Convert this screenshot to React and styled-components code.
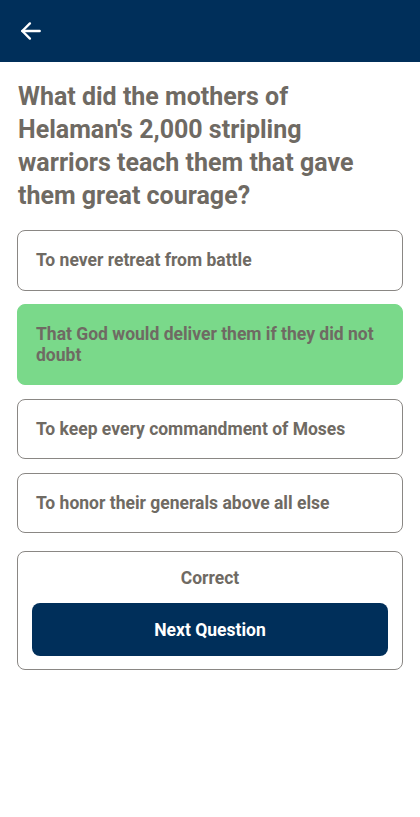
import React from 'react';
import styled, {createGlobalStyle} from 'styled-components';

const Global = createGlobalStyle`
body {
  margin: 0;
  background: #ffffff;
  font-family: Roboto, "Liberation Sans", sans-serif;
}
`;

const Header = styled.header`
height: 62px;
background: #002f5a;
display: flex;
align-items: center;
padding-left: 18px;
box-sizing: border-box;
`;

const BackButton = styled.button`
background: none;
border: none;
padding: 0;
width: 26px;
height: 26px;
display: flex;
align-items: center;
justify-content: center;
`;

const Content = styled.main`
padding: 18px 17px 0;
display: flex;
flex-direction: column;
`;

const Question = styled.h1`
margin: 0 0 18px;
padding-left: 1px;
max-width: 350px;
font-size: 25px;
line-height: 33px;
font-weight: 700;
color: #6f6a63;
`;

const Options = styled.div`
display: flex;
flex-direction: column;
gap: 13.5px;
`;

const Option = styled.div`
border: 1px solid ${p => (p.correct ? '#7ad98a' : '#8a8784')};
background: ${p => (p.correct ? '#7ad98a' : '#ffffff')};
border-radius: 8px;
padding: 19px 18px;
font-size: 17.5px;
line-height: 20.5px;
font-weight: 700;
color: #6f6a63;
`;

const Result = styled.div`
margin-top: 18px;
border: 1px solid #8a8784;
border-radius: 8px;
padding: 16px 14px 13px;
display: flex;
flex-direction: column;
align-items: stretch;
gap: 14px;
`;

const ResultText = styled.div`
text-align: center;
font-size: 17.5px;
line-height: 21px;
font-weight: 700;
color: #6f6a63;
`;

const NextButton = styled.button`
height: 53px;
border: none;
border-radius: 8px;
background: #002f5a;
color: #ffffff;
font-family: Roboto, "Liberation Sans", sans-serif;
font-size: 17.5px;
font-weight: 700;
`;

const options = [
    {text: 'To never retreat from battle'},
    {text: 'That God would deliver them if they did not doubt', correct: true},
    {text: 'To keep every commandment of Moses'},
    {text: 'To honor their generals above all else'},
];

const App = () => {
    return (
        <>
            <Global />
            <Header>
                <BackButton aria-label='Back'>
                    <svg width='26' height='26' viewBox='0 0 24 24' fill='none' stroke='#ffffff' strokeWidth='2.2' strokeLinecap='round' strokeLinejoin='round'>
                        <path d='M20 12H4' />
                        <path d='M11 5l-7 7 7 7' />
                    </svg>
                </BackButton>
            </Header>
            <Content>
                <Question>What did the mothers of Helaman's 2,000 stripling warriors teach them that gave them great courage?</Question>
                <Options>
                    {options.map(o => (
                        <Option key={o.text} correct={o.correct}>{o.text}</Option>
                    ))}
                </Options>
                <Result>
                    <ResultText>Correct</ResultText>
                    <NextButton>Next Question</NextButton>
                </Result>
            </Content>
        </>
    );
};

export default App;
